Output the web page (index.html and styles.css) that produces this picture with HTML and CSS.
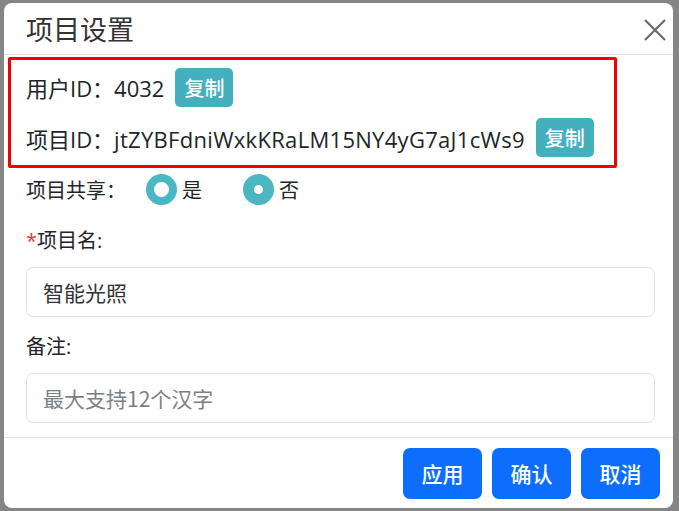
FILE: index.html
```html
<!DOCTYPE html>
<html lang="zh-CN">
<head>
  <meta charset="UTF-8" />
  <meta name="viewport" content="width=device-width, initial-scale=1.0"/>
  <title>项目设置</title>
  <link rel="stylesheet" href="styles.css">
</head>
<body>
  <div class="modal">
    <div class="modal-header">
      <h5 class="modal-title">项目设置</h5>
      <button type="button" class="btn-close" aria-label="Close">
        <svg width="24" height="24" viewBox="0 0 24 24"><path d="M2 2 L22 22 M22 2 L2 22" stroke="#6b6b6b" stroke-width="2.2" fill="none"/></svg>
      </button>
    </div>

    <div class="modal-body">
      <div class="id-box">
        <div class="id-row">
          <span>用户ID：4032</span>
          <button type="button" class="copy-btn">复制</button>
        </div>
        <div class="id-row">
          <span>项目ID：<span class="id-value">jtZYBFdniWxkKRaLM15NY4yG7aJ1cWs9</span></span>
          <button type="button" class="copy-btn">复制</button>
        </div>
      </div>

      <div class="share-row">
        <span class="share-label">项目共享：</span>
        <label class="radio"><span class="radio-dot"></span>是</label>
        <label class="radio checked"><span class="radio-dot"></span>否</label>
      </div>

      <label class="field-label"><span class="required">*</span>项目名:</label>
      <input type="text" class="form-control" value="智能光照">

      <label class="field-label">备注:</label>
      <input type="text" class="form-control" placeholder="最大支持12个汉字">
    </div>

    <div class="modal-footer">
      <button type="button" class="btn">应用</button>
      <button type="button" class="btn">确认</button>
      <button type="button" class="btn">取消</button>
    </div>
  </div>
</body>
</html>
```

FILE: styles.css
```css
html, body {
  height: 100%;
}

body {
  margin: 0;
  padding: 3px 6px 3px 4px;
  box-sizing: border-box;
  background-color: #858585;
  font-family: 'Open Sans', 'Noto Sans CJK SC', sans-serif;
  font-size: 20px;
  color: #212529;
}

.modal {
  height: 505px;
  background: white;
  border-radius: 8px;
  display: flex;
  flex-direction: column;
  overflow: hidden;
}

.modal-header {
  height: 51px;
  display: flex;
  align-items: center;
  justify-content: space-between;
  padding: 0 6px 0 22px;
  border-bottom: 1px solid #dee2e6;
}

.modal-title {
  margin: 0;
  font-size: 27px;
  font-weight: normal;
  font-family: 'Noto Sans CJK SC', sans-serif;
  color: #333;
}

.btn-close {
  background: none;
  border: none;
  padding: 0;
  width: 24px;
  height: 24px;
  margin-top: 2px;
  cursor: pointer;
}

.modal-body {
  flex: 1;
  padding: 2px 18px 0 22px;
  border-bottom: 1px solid #dee2e6;
}

.id-box {
  box-sizing: border-box;
  width: 609px;
  margin-left: -18px;
  padding: 2px 0 2px 15px;
  border: 3px solid #f00000;
  border-radius: 2px;
  font-size: 22px;
}

.id-row {
  height: 50px;
  display: flex;
  align-items: center;
  gap: 11px;
}

.id-row + .id-row {
  height: 51px;
}

.id-value {
  letter-spacing: 0.3px;
}

.copy-btn {
  height: 39px;
  padding: 0 9px;
  background-color: #44b0bd;
  color: white;
  border: none;
  border-radius: 5px;
  font-family: 'Noto Sans CJK SC', sans-serif;
  font-size: 20px;
  font-weight: 500;
}

.share-row {
  height: 43px;
  display: flex;
  align-items: center;
}

.share-label {
  width: 120px;
}

.radio {
  display: flex;
  align-items: center;
  gap: 5px;
  margin-right: 41px;
}

.radio-dot {
  width: 31px;
  height: 31px;
  box-sizing: border-box;
  border-radius: 50%;
  border: 8px solid #4ab7c2;
  background: white;
}

.radio.checked .radio-dot {
  border-width: 11px;
}

.field-label {
  display: block;
  margin: 17px 0 14px;
  line-height: 25px;
}

.required {
  color: #e53935;
}

.form-control {
  display: block;
  width: 100%;
  height: 50px;
  box-sizing: border-box;
  padding: 0 16px;
  border: 1px solid #dee2e6;
  border-radius: 7px;
  font-family: 'Noto Sans CJK SC', sans-serif;
  font-size: 21px;
  color: #333;
}

.form-control::placeholder {
  color: #7a7f85;
}

.modal-footer {
  height: 70px;
  display: flex;
  align-items: center;
  justify-content: flex-end;
  gap: 10px;
  padding: 0 13px 0 0;
}

.btn {
  width: 79px;
  height: 51px;
  background-color: #0d6efd;
  color: white;
  border: none;
  border-radius: 7px;
  font-family: 'Noto Sans CJK SC', sans-serif;
  font-size: 21px;
  font-weight: 500;
  cursor: pointer;
}
```
